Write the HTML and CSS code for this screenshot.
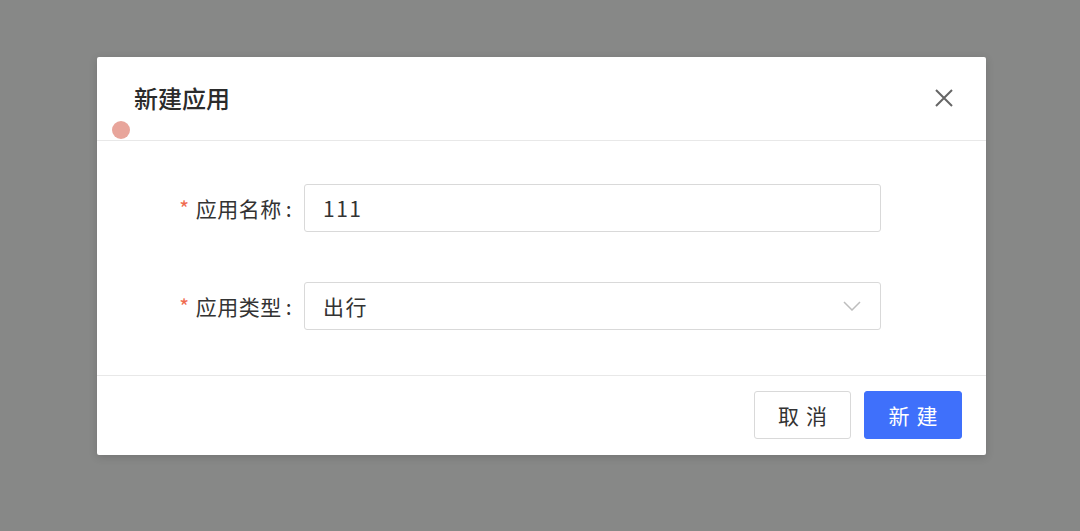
FILE: index.html
```html
<!DOCTYPE html>
<html lang="zh">
<head>
<meta charset="utf-8">
<title>新建应用</title>
<link rel="stylesheet" href="styles.css">
</head>
<body>
<div class="overlay">
  <div class="modal">
    <div class="modal-header">
      <h2 class="modal-title">新建应用</h2>
      <button class="close-btn" aria-label="关闭">
        <svg width="20" height="20" viewBox="0 0 20 20"><path d="M2 2 L18 18 M18 2 L2 18" stroke="#666" stroke-width="2" fill="none"/></svg>
      </button>
      <span class="dot"></span>
    </div>
    <div class="modal-body">
      <div class="form-row">
        <label class="form-label"><span class="req">*</span>应用名称<span class="colon">:</span></label>
        <div class="form-control"><div class="input">111</div></div>
      </div>
      <div class="form-row">
        <label class="form-label"><span class="req">*</span>应用类型<span class="colon">:</span></label>
        <div class="form-control">
          <div class="input select">
            <span>出行</span>
            <svg class="chev" width="18" height="10" viewBox="0 0 18 10"><path d="M1 1 L9 9 L17 1" stroke="#bdbdbd" stroke-width="1.5" fill="none"/></svg>
          </div>
        </div>
      </div>
    </div>
    <div class="modal-footer">
      <button class="btn">取消</button>
      <button class="btn btn-primary">新建</button>
    </div>
  </div>
</div>
</body>
</html>
```

FILE: styles.css
```css
* { box-sizing: border-box; }
html, body { margin: 0; padding: 0; }
body {
  width: 1080px;
  height: 531px;
  background: #878887;
  font-family: "Noto Sans CJK SC", "Noto Sans", sans-serif;
  color: #333;
  overflow: hidden;
}
.overlay {
  padding: 57px 0 0 97px;
}
.modal {
  width: 889px;
  background: #fff;
  border-radius: 2px;
  box-shadow: 0 2px 8px rgba(0,0,0,0.15);
}
.modal-header {
  position: relative;
  height: 84px;
  border-bottom: 1px solid #e8e8e8;
  display: flex;
  align-items: center;
  justify-content: space-between;
  padding: 0 32px 0 37px;
}
.modal-title {
  margin: 0;
  font-size: 24px;
  font-weight: 500;
  color: #2b2b2b;
  line-height: 1;
  padding-bottom: 2px;
}
.close-btn {
  border: 0;
  background: none;
  padding: 0;
  width: 20px;
  height: 20px;
  display: flex;
  cursor: pointer;
  margin-bottom: 2px;
}
.dot {
  position: absolute;
  left: 15px;
  top: 64px;
  width: 18px;
  height: 18px;
  border-radius: 50%;
  background: #e8a59b;
}
.modal-body {
  padding: 43px 0 45px;
  display: flex;
  flex-direction: column;
  gap: 50px;
}
.form-row {
  display: flex;
  align-items: center;
}
.form-label {
  width: 207px;
  padding-right: 12px;
  text-align: right;
  font-size: 21px;
  color: #333;
  line-height: 1;
  letter-spacing: 0.5px;
}
.colon {
  margin-left: 4px;
}
.req {
  color: #f06a4f;
  margin-right: 6px;
  font-size: 21px;
}
.form-control { width: 577px; }
.input {
  height: 48px;
  border: 1px solid #d9d9d9;
  border-radius: 3px;
  padding: 0 18px;
  font-size: 21px;
  display: flex;
  align-items: center;
  color: #333;
  letter-spacing: 1.5px;
}
.select {
  justify-content: space-between;
  padding-right: 19px;
}
.chev { display: block; }
.modal-footer {
  border-top: 1px solid #e8e8e8;
  padding: 15px 24px 16px;
  display: flex;
  justify-content: flex-end;
  gap: 13px;
}
.btn {
  height: 48px;
  width: 97px;
  border: 1px solid #d9d9d9;
  border-radius: 3px;
  background: #fff;
  font-family: inherit;
  font-size: 21px;
  color: #333;
  letter-spacing: 7px;
  padding: 0 0 0 7px;
  cursor: pointer;
}
.btn-primary {
  width: 98px;
  background: #3f70fb;
  border-color: #3f70fb;
  color: #fff;
}
```
